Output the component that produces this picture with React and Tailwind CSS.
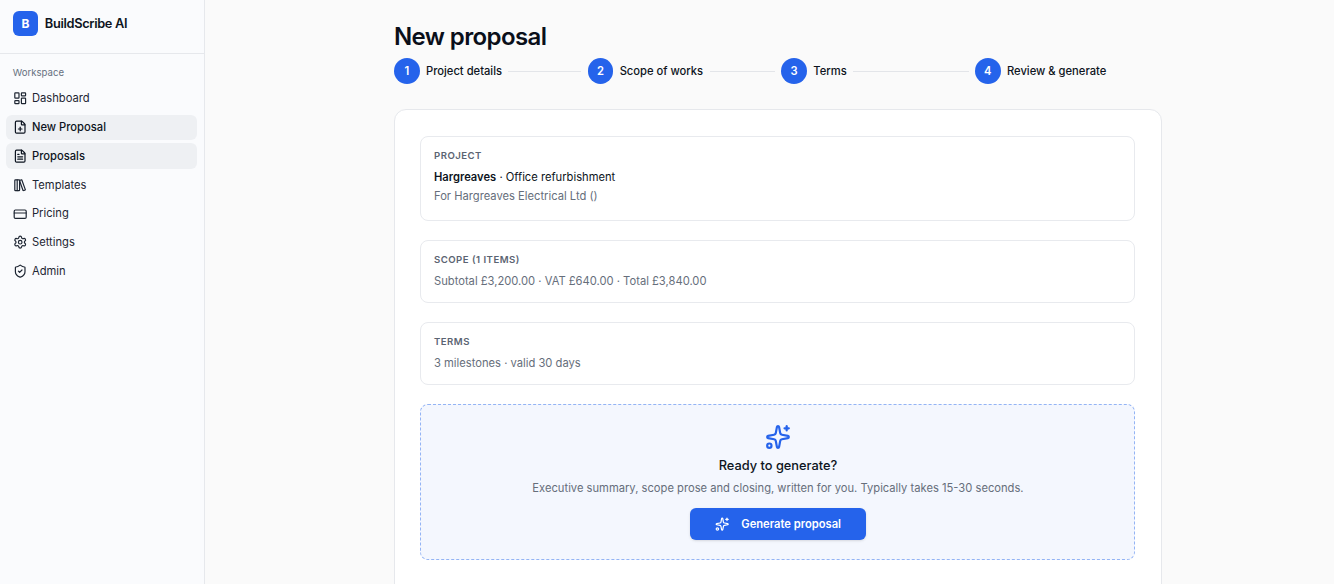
import React from 'react'
import {LayoutDashboard, FilePlus, FileText, LibraryBig, CreditCard, Settings, ShieldCheck, Sparkles} from 'lucide-react'

const navItems = [
    {label: 'Dashboard', icon: LayoutDashboard},
    {label: 'New Proposal', icon: FilePlus, active: true},
    {label: 'Proposals', icon: FileText, active: true},
    {label: 'Templates', icon: LibraryBig},
    {label: 'Pricing', icon: CreditCard},
    {label: 'Settings', icon: Settings},
    {label: 'Admin', icon: ShieldCheck},
]

const steps = ['Project details', 'Scope of works', 'Terms', 'Review & generate']

const Section = ({title, height, children}) => (
    <div className={`rounded-lg border border-[#e8eaee] px-[13px] pt-[11px] ${height}`}>
        <div className="text-[9.6px] leading-[15px] font-semibold tracking-[0.48px] text-[#5b6472]">{title}</div>
        {children}
    </div>
)

const App = () => {
    return (
        <div className="flex h-[584px] overflow-hidden bg-[#fafafa] font-['Inter',sans-serif] text-[#0d1421]">
            <aside className="w-[204.8px] shrink-0 border-r border-[#e6e8ec] bg-[#fafbfd]">
                <div className="flex h-[54px] items-center gap-[6.4px] border-b border-[#e6e8ec] pl-[12.8px] pb-[6px]">
                    <div className="flex h-[25.6px] w-[25.6px] items-center justify-center rounded-md bg-[#2563eb] text-[12px] font-bold text-white">B</div>
                    <span className="text-[12.8px] font-semibold tracking-[-0.32px]">BuildScribe AI</span>
                </div>
                <div className="px-[6.4px] pt-[11px]">
                    <div className="px-[6.4px] text-[9.6px] leading-[15px] text-[#667080]">Workspace</div>
                    <nav className="mt-[5.8px] flex flex-col gap-[3.2px]">
                        {navItems.map(({label, icon: Icon, active}) => (
                            <div
                                key={label}
                                className={`flex h-[25.6px] items-center gap-[4.8px] rounded-md px-[6.4px] text-[11.2px] ${active ? 'bg-[#eef0f3] font-medium text-[#0d1421]' : 'text-[#1e2633]'}`}
                            >
                                <Icon size={14.4} strokeWidth={2} className="shrink-0" />
                                {label}
                            </div>
                        ))}
                    </nav>
                </div>
            </aside>
            <main className="flex-1 pl-[189.2px]">
                <div className="w-[768px]">
                    <h1 className="pt-[21px] text-[24px] leading-[32px] font-semibold tracking-[-0.6px] text-[#0a0f1a]">New proposal</h1>
                    <div className="mt-[5.4px] flex items-center">
                        {steps.map((step, i) => (
                            <div key={step} className={`flex items-center ${i < 3 ? 'w-[193.67px]' : ''}`}>
                                <div className="flex h-[25.6px] w-[25.6px] shrink-0 items-center justify-center rounded-full bg-[#2563eb] text-[11.2px] font-semibold text-white">{i + 1}</div>
                                <span className="mt-[1px] ml-[6.4px] shrink-0 text-[11.2px] font-medium whitespace-nowrap">{step}</span>
                                {i < 3 && <div className="mx-[6.4px] h-px flex-1 bg-[#e3e5e9]" />}
                            </div>
                        ))}
                    </div>
                    <div className="mt-[24.6px] flex h-[520px] flex-col gap-[19px] rounded-xl border border-[#e6e8ec] bg-white pt-[26px] pr-[26px] pl-[25px]">
                        <Section title="PROJECT" height="h-[85px]">
                            <div className="mt-[5px] text-[11.2px] leading-[18px]"><span className="font-semibold">Hargreaves</span> · Office refurbishment</div>
                            <div className="mt-px text-[11.2px] leading-[18px] text-[#666e7b]">For Hargreaves Electrical Ltd ()</div>
                        </Section>
                        <Section title="SCOPE (1 ITEMS)" height="h-[63px]">
                            <div className="mt-[5px] text-[11.2px] leading-[18px] text-[#666e7b]">Subtotal £3,200.00 · VAT £640.00 · Total £3,840.00</div>
                        </Section>
                        <Section title="TERMS" height="h-[63px]">
                            <div className="mt-[5px] text-[11.2px] leading-[18px] text-[#666e7b]">3 milestones · valid 30 days</div>
                        </Section>
                        <div className="flex h-[156px] flex-col items-center rounded-lg border border-dashed border-[#93b4f5] bg-[#f4f7fe] pt-[19px] pl-[1px]">
                            <Sparkles size={26} strokeWidth={2} className="text-[#2563eb]" />
                            <div className="mt-[7px] text-[12.8px] leading-[18px] font-medium">Ready to generate?</div>
                            <div className="mt-[4px] text-[11.2px] leading-[18px] text-[#666e7b]">Executive summary, scope prose and closing, written for you. Typically takes 15-30 seconds.</div>
                            <button className="mt-[11px] flex h-[32px] w-[176px] items-center justify-center gap-[12px] rounded-md bg-[#2563eb] pt-[1px] text-[11.2px] font-semibold text-white shadow-sm">
                                <Sparkles size={14.4} strokeWidth={2} />
                                Generate proposal
                            </button>
                        </div>
                    </div>
                </div>
            </main>
        </div>
    )
}

export default App
